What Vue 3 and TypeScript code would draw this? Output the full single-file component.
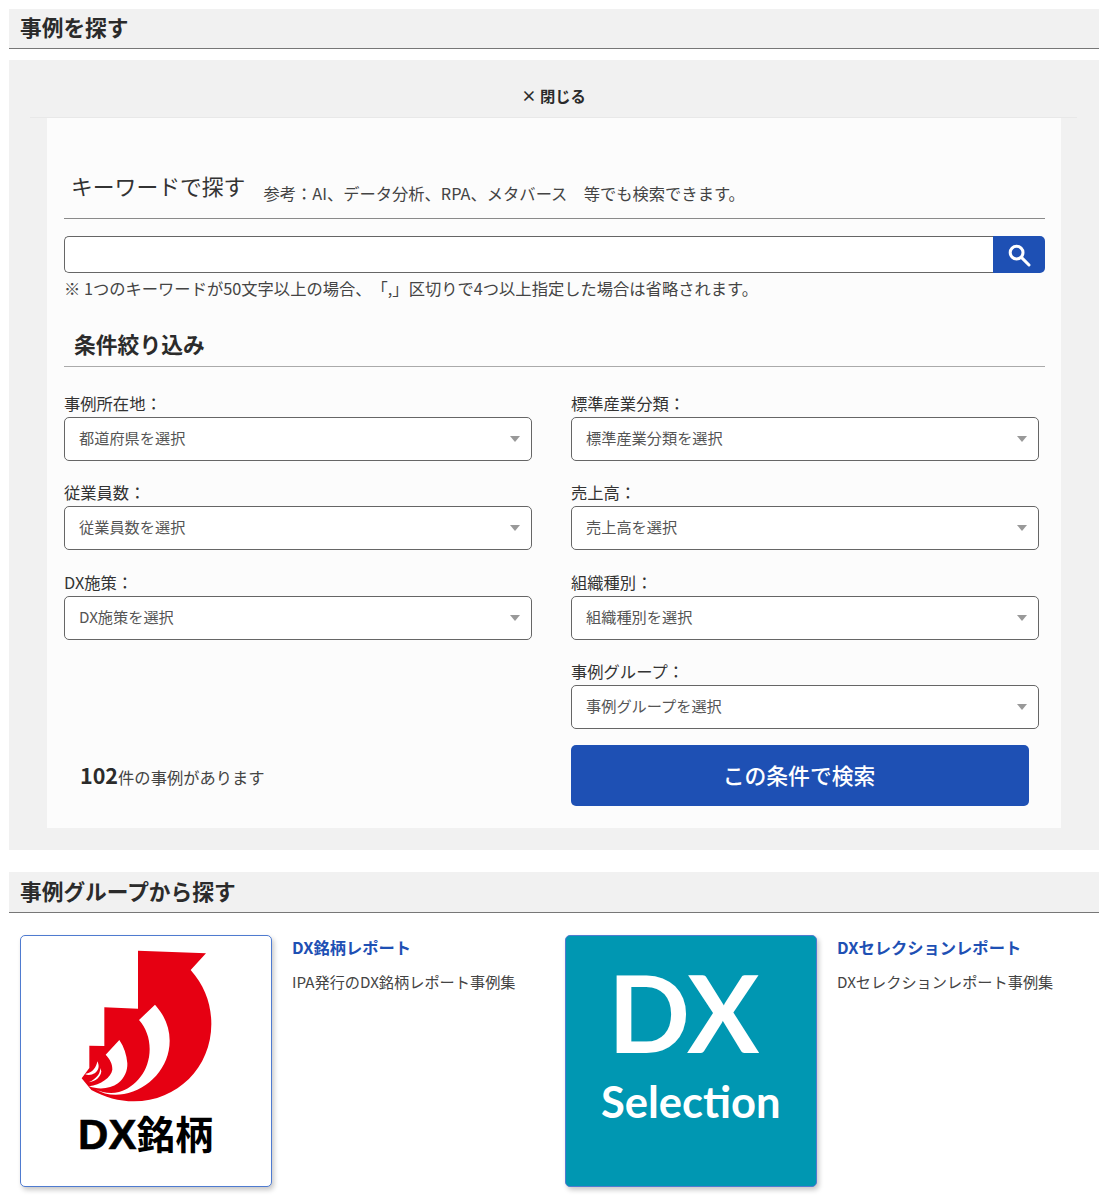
<script setup lang="ts">
interface Field { label: string; placeholder: string; column: number }
const fields: Field[] = [
  { label: '事例所在地：', placeholder: '都道府県を選択', column: 1 },
  { label: '標準産業分類：', placeholder: '標準産業分類を選択', column: 2 },
  { label: '従業員数：', placeholder: '従業員数を選択', column: 1 },
  { label: '売上高：', placeholder: '売上高を選択', column: 2 },
  { label: 'DX施策：', placeholder: 'DX施策を選択', column: 1 },
  { label: '組織種別：', placeholder: '組織種別を選択', column: 2 },
  { label: '事例グループ：', placeholder: '事例グループを選択', column: 2 },
]
</script>

<template>
  <div class="page">
    <h2 class="section-title first">事例を探す</h2>
    <section class="panel">
      <div class="close-row"><span class="close">× 閉じる</span></div>
      <div class="inner">
        <div class="keyword-head">
          <h3 class="keyword-title">キーワードで探す</h3>
          <span class="hint">参考：AI、データ分析、RPA、メタバース　等でも検索できます。</span>
        </div>
        <div class="search-box">
          <div class="search-input"></div>
          <button class="search-btn" aria-label="検索">
            <svg width="24" height="24" viewBox="0 0 24 24" fill="none" stroke="#fff">
              <circle cx="9.6" cy="9.6" r="6.4" stroke-width="3" />
              <path d="M14.4 14.4 L22 22" stroke-width="3" stroke-linecap="round" />
            </svg>
          </button>
        </div>
        <p class="note">※ 1つのキーワードが50文字以上の場合、「,」区切りで4つ以上指定した場合は省略されます。</p>
        <h3 class="filter-title">条件絞り込み</h3>
        <div class="fields">
          <div
            v-for="f in fields"
            :key="f.label"
            class="field"
            :class="f.column === 1 ? 'col-left' : 'col-right'"
          >
            <label class="field-label">{{ f.label }}</label>
            <div class="select">
              <span class="select-text">{{ f.placeholder }}</span>
              <i class="arrow"></i>
            </div>
          </div>
        </div>
        <div class="actions">
          <div class="count"><b>102</b>件の事例があります</div>
          <button class="submit">この条件で検索</button>
        </div>
      </div>
    </section>

    <h2 class="section-title second">事例グループから探す</h2>
    <div class="groups">
      <article class="group">
        <div class="thumb thumb-white">
          <svg class="mark" viewBox="235 85 405 462">
            <path fill="#e60012" d="M412 90 L616 98 L570 148 C612 195 632 250 632 310 C632 440 530 542 400 542 C355 542 312 530 272 508 L243 473 L266 442 L266 375 L311 376 L311 260 L412 264 Z" />
            <path fill="#fff" d="M463 252 L415 298 C436 322 447 352 447 385 C447 450 405 500 355 514 C330 520 305 516 283 505 C310 522 340 525 370 520 C445 506 507 440 507 360 C507 318 490 282 463 252 Z" />
            <path fill="#fff" d="M356 358 L315 402 C328 416 336 430 335 447 C332 470 300 492 265 497 C295 508 330 504 352 488 C372 472 381 450 380 428 C378 402 370 378 356 358 Z" />
            <path fill="#fff" d="M290 422 C287 440 277 456 253 460 C262 466 275 462 282 458 C293 450 298 438 290 422 Z M298 442 C300 458 288 474 264 485 C285 482 300 470 302 452 Z" />
          </svg>
          <span class="mark-text"><span class="mark-dx">DX</span>銘柄</span>
        </div>
        <div class="group-text">
          <a class="group-title">DX銘柄レポート</a>
          <p class="group-desc">IPA発行のDX銘柄レポート事例集</p>
        </div>
      </article>
      <article class="group">
        <div class="thumb thumb-teal">
          <span class="dx">DX</span>
          <span class="selection">Selection</span>
        </div>
        <div class="group-text">
          <a class="group-title">DXセレクションレポート</a>
          <p class="group-desc">DXセレクションレポート事例集</p>
        </div>
      </article>
    </div>
  </div>
</template>

<style>
html, body { margin: 0; background: #fff; }
</style>

<style scoped>
.page {
  box-sizing: border-box;
  width: 1109px;
  height: 1200px;
  overflow: hidden;
  padding: 9px 10px 0 9px;
  font-family: "Noto Sans CJK JP", "Noto Sans", sans-serif;
  color: #333;
  font-size: 16.3px;
  text-spacing-trim: space-all;
}
.section-title {
  margin: 0;
  padding-left: 11px;
  background: #f1f1f1;
  border-bottom: 1px solid #777;
  font-size: 21.7px;
  font-weight: 700;
  color: #2b2b2b;
}
.section-title.first { height: 39px; line-height: 36px; }
.section-title.second { margin-top: 22px; height: 40px; line-height: 37px; }
.panel {
  margin-top: 11px;
  background: #f1f1f1;
  padding-bottom: 22px;
}
.close-row {
  margin: 0 22px 0 21px;
  height: 44px;
  padding-top: 13px;
  border-bottom: 1px solid #e8e8e8;
  display: flex;
  justify-content: center;
  align-items: center;
}
.close { font-weight: 700; font-size: 15.3px; color: #2b2b2b; line-height: 24px; }
.inner {
  margin: 0 38px;
  height: 710px;
  box-sizing: border-box;
  background: #fcfcfc;
  padding: 0 16px 0 17px;
}
.keyword-head {
  height: 101px;
  box-sizing: border-box;
  border-bottom: 1px solid #8a8a8a;
  padding: 52px 0 0 7px;
  display: flex;
  align-items: flex-start;
  gap: 18px;
}
.keyword-title {
  margin: 0;
  font-size: 21.8px;
  font-weight: 400;
  line-height: 32px;
  color: #333;
}
.hint { margin-top: 11px; line-height: 24px; color: #444; }
.search-box {
  margin-top: 17px;
  display: flex;
  height: 37px;
}
.search-input {
  flex: 1;
  box-sizing: border-box;
  background: #fff;
  border: 1px solid #666;
  border-right: none;
  border-radius: 5px 0 0 5px;
}
.search-btn {
  width: 52px;
  border: none;
  padding: 0;
  background: #1e50b4;
  border-radius: 0 5px 5px 0;
  display: flex;
  align-items: center;
  justify-content: center;
}
.note {
  margin: 3px 0 0;
  line-height: 24px;
  color: #444;
}
.filter-title {
  margin: 28px 0 0;
  height: 38px;
  line-height: 32px;
  padding: 0 0 0 10px;
  font-size: 21.8px;
  font-weight: 700;
  color: #2b2b2b;
  border-bottom: 1px solid #aaa;
}
.fields {
  margin-top: 24px;
  display: grid;
  grid-template-columns: 468px 468px;
  column-gap: 39px;
  row-gap: 19.3px;
}
.col-left { grid-column: 1; }
.col-right { grid-column: 2; }
.field:nth-child(7) { grid-row: 4; }
.field-label { display: block; line-height: 24px; margin-bottom: 2px; color: #333; }
.select {
  box-sizing: border-box;
  height: 44px;
  background: #fff;
  border: 1px solid #666;
  border-radius: 5px;
  padding: 0 11px 0 14px;
  display: flex;
  align-items: center;
  justify-content: space-between;
  color: #555;
}
.select-text { font-size: 15.2px; line-height: 24px; margin-top: -4px; }
.arrow {
  width: 0;
  height: 0;
  border-left: 5px solid transparent;
  border-right: 5px solid transparent;
  border-top: 6px solid #999;
}
.actions {
  margin-top: 16.3px;
  display: grid;
  grid-template-columns: 468px 458px;
  column-gap: 39px;
  align-items: center;
}
.count { padding: 0 0 0 16px; line-height: 34px; color: #444; }
.count b { font-size: 21.5px; font-weight: 700; color: #2b2b2b; }
.submit {
  height: 61px;
  border: none;
  border-radius: 5px;
  background: #1e50b4;
  color: #fff;
  font-family: inherit;
  font-size: 21.8px;
  font-weight: 500;
  padding: 0 2px 2px 0;
}
.groups {
  margin-top: 21.5px;
  padding-left: 11px;
  display: grid;
  grid-template-columns: 545px 1fr;
}
.group { display: flex; gap: 20.5px; }
.thumb {
  box-sizing: border-box;
  flex: none;
  width: 251.5px;
  height: 252.5px;
  border-radius: 5px;
  border: 1px solid #4f7bd0;
  box-shadow: 2px 3px 5px rgba(0,0,0,.22);
  display: flex;
  flex-direction: column;
  align-items: center;
}
.thumb-white { background: #fff; padding-top: 13px; }
.mark { width: 135px; height: 154px; display: block; margin-left: 1px; }
.mark-text {
  margin-top: 7.5px;
  font-size: 38.5px;
  line-height: 44px;
  font-weight: 700;
  color: #000;
  white-space: nowrap;
}
.mark-dx {
  font-family: "Liberation Sans", Arial, sans-serif;
  font-size: 42px;
  font-weight: 700;
  -webkit-text-stroke: 0.6px #000;
}
.thumb-teal { background: #0097b2; color: #fff; font-family: Lato, sans-serif; }
.dx {
  font-size: 108px;
  line-height: 105px;
  font-weight: 700;
  margin: 23px 14px 0 0;
}
.selection {
  font-size: 43.5px;
  line-height: 50px;
  font-weight: 700;
  margin-top: 12px;
}
.group-title {
  display: block;
  color: #1e50b4;
  font-weight: 700;
  line-height: 24px;
}
.group-desc { margin: 10px 0 0; font-size: 15.2px; line-height: 24px; color: #444; }
</style>
